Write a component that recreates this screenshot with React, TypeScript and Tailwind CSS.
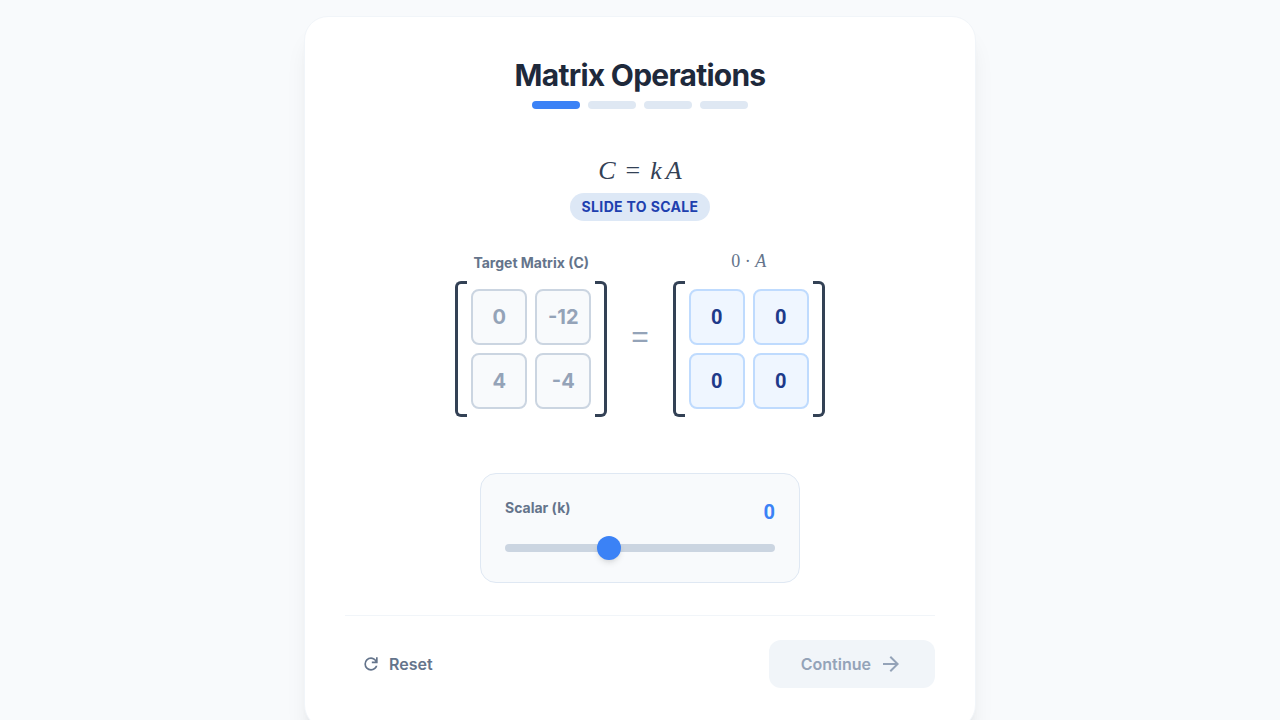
import { useState } from "react";
import clsx from "clsx";

const BASE_MATRIX = [0, -6, 2, -2];
const TARGET_MATRIX = [0, -12, 4, -4];
const STEP_COUNT = 4;

type MatrixProps = {
  values: number[];
  active?: boolean;
};

function Matrix({ values, active = false }: MatrixProps) {
  return <div className="flex">
    <div className="w-3 rounded-l-md border-y-3 border-l-3 border-[#334155]" />
    <div className="grid grid-cols-2 gap-2 px-1 py-2">
      {values.map((value, index) => (
        <div
          key={index}
          className={clsx(
            "flex size-14 items-center justify-center rounded-lg border-2 text-xl font-bold",
            active
              ? "border-[#bfdbfe] bg-[#eff6ff] font-[Roboto,sans-serif] text-[#1e3a8a]"
              : "border-[#cbd5e1] bg-[#f8fafc] text-[#94a3b8]"
          )}
        >
          {value}
        </div>
      ))}
    </div>
    <div className="w-3 rounded-r-md border-y-3 border-r-3 border-[#334155]" />
  </div>
}

function Progress({ step }: { step: number }) {
  return <div className="flex justify-center gap-2">
    {Array.from({ length: STEP_COUNT }, (_, index) => (
      <div key={index} className={clsx("h-2 w-12 rounded-full", index <= step ? "bg-[#3b82f6]" : "bg-[#dfe8f3]")} />
    ))}
  </div>
}

function RefreshIcon() {
  return <svg className="size-5" viewBox="0 -960 960 960" fill="currentColor" aria-hidden="true">
    <path d="M480-160q-134 0-227-93t-93-227q0-134 93-227t227-93q69 0 132 28.5T720-690v-110h80v280H520v-80h168q-32-56-87.5-88T480-720q-100 0-170 70t-70 170q0 100 70 170t170 70q77 0 139-44t87-116h84q-28 106-114 173t-196 67Z" />
  </svg>
}

function ArrowIcon() {
  return <svg className="size-6" viewBox="0 -960 960 960" fill="currentColor" aria-hidden="true">
    <path d="M647-440H160v-80h487L423-744l57-56 320 320-320 320-57-56 224-224Z" />
  </svg>
}

export default function App() {
  const [scalar, setScalar] = useState(0);
  const [step, setStep] = useState(0);
  // "+ 0" turns -0 into 0
  const result = BASE_MATRIX.map((value) => value * scalar + 0);
  const solved = result.every((value, index) => value === TARGET_MATRIX[index]);

  const reset = () => {
    setScalar(0);
    setStep(0);
  };

  return <div className="flex min-h-screen items-center justify-center bg-[#f8fafc] p-4 font-[Inter,sans-serif]">
    <main className="w-full max-w-2xl rounded-3xl border border-[#f1f5f9] bg-white p-10 shadow-xl shadow-black/8">
      <header className="flex flex-col gap-2">
        <h1 className="text-center text-3xl font-bold tracking-tight text-[#1e293b]">Matrix Operations</h1>
        <Progress step={step} />
      </header>

      <section className="mt-12 flex flex-col items-center">
        <p className="flex gap-2.5 font-['Liberation_Serif',serif] text-[26px] leading-7 text-[#334155]">
          <i>C</i>
          <span>=</span>
          <span className="flex gap-1"><i>k</i><i>A</i></span>
        </p>
        <p className="mt-2 rounded-full bg-[#dde8f6] px-3 py-1 text-sm font-bold tracking-wide text-[#1e40af] uppercase">Slide to scale</p>
      </section>

      <section className="mt-8 flex flex-wrap items-center justify-center gap-6">
        <div className="flex flex-col items-center gap-2">
          <h2 className="text-sm font-bold text-[#64748b]">Target Matrix (C)</h2>
          <Matrix values={TARGET_MATRIX} />
        </div>
        <span className="pt-1 font-['Liberation_Sans',sans-serif] text-3xl text-[#94a3b8]">=</span>
        <div className="flex flex-col items-center gap-2">
          <h2 className="pb-1 font-['Liberation_Serif',serif] text-lg leading-4 text-[#64748b]">{scalar} · <i>A</i></h2>
          <Matrix values={result} active />
        </div>
      </section>

      <section className="mx-auto mt-14 max-w-xs rounded-2xl border border-[#dfe8f3] bg-[#f8fafc] p-6">
        <div className="mb-4 flex items-start justify-between">
          <label htmlFor="scalar" className="text-sm font-bold text-[#64748b]">Scalar (k)</label>
          <output htmlFor="scalar" className="font-[Roboto,sans-serif] text-xl font-bold text-[#3b82f6]">{scalar}</output>
        </div>
        <div className="pt-0.5 pb-1.5">
          <input
            id="scalar"
            type="range"
            min={-3}
            max={5}
            value={scalar}
            onChange={(event) => setScalar(Number(event.target.value))}
            className="block h-2 w-full cursor-pointer appearance-none rounded-full bg-[#cbd5e1] [&::-webkit-slider-thumb]:size-6 [&::-webkit-slider-thumb]:appearance-none [&::-webkit-slider-thumb]:rounded-full [&::-webkit-slider-thumb]:bg-[#3b82f6] [&::-webkit-slider-thumb]:shadow-md"
          />
        </div>
      </section>

      <footer className="mt-8 flex items-center justify-between border-t border-[#f1f5f9] pt-6">
        <button type="button" onClick={reset} className="flex h-12 items-center gap-2 rounded-xl px-4 font-semibold text-[#64748b]">
          <RefreshIcon />
          Reset
        </button>
        <button
          type="button"
          disabled={!solved}
          onClick={() => setStep(Math.min(step + 1, STEP_COUNT - 1))}
          className="flex h-12 items-center gap-2 rounded-xl bg-[#3b82f6] px-8 font-semibold text-white disabled:bg-[#f1f5f9] disabled:text-[#94a3b8]"
        >
          Continue
          <ArrowIcon />
        </button>
      </footer>
    </main>
  </div>
}
